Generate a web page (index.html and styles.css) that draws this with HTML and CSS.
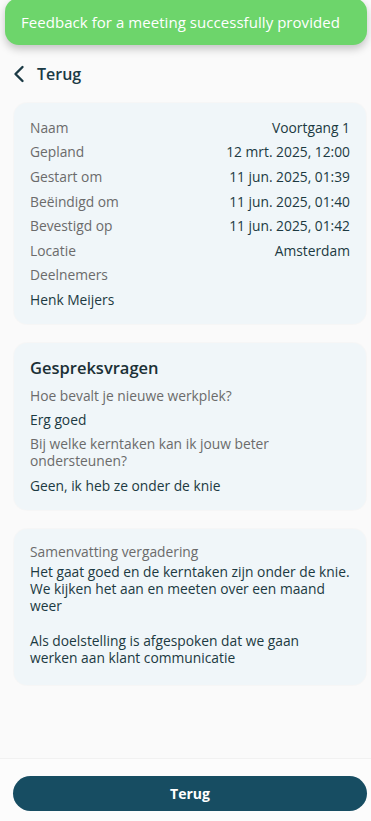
FILE: index.html
```html
<!DOCTYPE html>
<html lang="nl">
<head>
<meta charset="utf-8">
<title>Gesprek</title>
<link rel="stylesheet" href="styles.css">
</head>
<body>
<div class="screen">
  <div class="toast">Feedback for a meeting successfully provided</div>
  <main class="content">
    <div class="back">
      <svg class="chev" width="12" height="18" viewBox="0 0 12 18"><path d="M9.5 2 L2.5 9 L9.5 16" fill="none" stroke="#1b3a45" stroke-width="2.4" stroke-linecap="round" stroke-linejoin="round"/></svg>
      <span>Terug</span>
    </div>
    <section class="card info">
      <div class="row"><span class="label">Naam</span><span class="value">Voortgang 1</span></div>
      <div class="row"><span class="label">Gepland</span><span class="value">12 mrt. 2025, 12:00</span></div>
      <div class="row"><span class="label">Gestart om</span><span class="value">11 jun. 2025, 01:39</span></div>
      <div class="row"><span class="label">Beëindigd om</span><span class="value">11 jun. 2025, 01:40</span></div>
      <div class="row"><span class="label">Bevestigd op</span><span class="value">11 jun. 2025, 01:42</span></div>
      <div class="row"><span class="label">Locatie</span><span class="value">Amsterdam</span></div>
      <div class="row"><span class="label">Deelnemers</span></div>
      <div class="row"><span class="value">Henk Meijers</span></div>
    </section>
    <section class="card questions">
      <h2 class="title">Gespreksvragen</h2>
      <p class="q">Hoe bevalt je nieuwe werkplek?</p>
      <p class="a">Erg goed</p>
      <p class="q">Bij welke kerntaken kan ik jouw beter ondersteunen?</p>
      <p class="a">Geen, ik heb ze onder de knie</p>
    </section>
    <section class="card summary">
      <p class="q">Samenvatting vergadering</p>
      <p class="text">Het gaat goed en de kerntaken zijn onder de knie. We kijken het aan en meeten over een maand weer</p>
      <p class="text gap">Als doelstelling is afgespoken dat we gaan werken aan klant communicatie</p>
    </section>
  </main>
  <footer class="footer">
    <button class="btn">Terug</button>
  </footer>
</div>
</body>
</html>
```
FILE: styles.css
```css
* { box-sizing: border-box; }
html, body { margin: 0; padding: 0; }
body {
  background: #fafafa;
  font-family: "Open Sans", "Noto Sans", sans-serif;
  color: #1c3a42;
  width: 371px;
  height: 821px;
  overflow: hidden;
}
.screen {
  position: relative;
  height: 821px;
  display: flex;
  flex-direction: column;
}
.toast {
  position: absolute;
  left: 5px;
  right: 4px;
  top: -2px;
  height: 47px;
  background: #6dd56b;
  border-radius: 14px;
  box-shadow: 0 4px 8px rgba(0,0,0,0.22);
  color: #fff;
  font-size: 15px;
  letter-spacing: 0.05px;
  padding: 14px 0 0 16px;
  z-index: 2;
}
.content {
  flex: 1;
  padding: 62px 5px 0 14px;
  display: flex;
  flex-direction: column;
}
.back {
  display: flex;
  align-items: center;
  gap: 12px;
  height: 24px;
  margin-left: -1px;
  font-size: 16px;
  font-weight: 600;
  color: #1b3a45;
}
.card {
  background: #f0f6f9;
  border-radius: 13px;
  padding: 14px 16px;
  box-shadow: 0 0 0 1px rgba(0,0,0,0.015);
}
.info {
  margin-top: 17px;
  padding: 12px 16px 12px;
}
.row {
  display: flex;
  justify-content: space-between;
  height: 24.6px;
  align-items: center;
  font-size: 13.8px;
}
.label { color: #6b6b6b; }
.value { color: #1c3a42; }
.questions { margin-top: 19px; padding: 15px 16px 16px; }
.title {
  margin: 0 0 9.5px;
  font-size: 16.5px;
  line-height: 20px;
  font-weight: 600;
  color: #1b3036;
}
.q, .a, .text { margin: 0; font-size: 13.8px; }
.q { color: #6b6b6b; line-height: 17px; }
.a { color: #1c3a42; line-height: 17px; margin: 7px 0 7px; }
.questions .a:last-child { margin-bottom: 0; margin-top: 8px; }
.summary { margin-top: 19px; padding: 13.5px 16px 19.5px; }
.summary .q { margin-bottom: 3px; }
.text { line-height: 17px; color: #1c3a42; }
.text.gap { margin-top: 18px; }
.footer {
  height: 63px;
  background: #fcfcfc;
  border-top: 1px solid #f1f1f1;
  padding: 17px 4px 0 13px;
}
.btn {
  width: 100%;
  height: 35px;
  border: none;
  border-radius: 18px;
  background: #174d62;
  color: #fff;
  font-family: inherit;
  font-size: 14px;
  font-weight: 700;
}
```
